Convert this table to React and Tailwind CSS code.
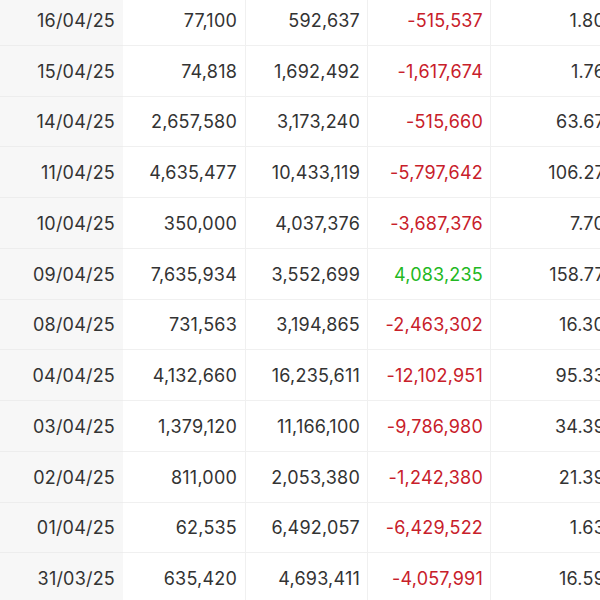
const rows = [
  ['16/04/25', '77,100', '592,637', '-515,537', '1.80'],
  ['15/04/25', '74,818', '1,692,492', '-1,617,674', '1.76'],
  ['14/04/25', '2,657,580', '3,173,240', '-515,660', '63.67'],
  ['11/04/25', '4,635,477', '10,433,119', '-5,797,642', '106.27'],
  ['10/04/25', '350,000', '4,037,376', '-3,687,376', '7.70'],
  ['09/04/25', '7,635,934', '3,552,699', '4,083,235', '158.77'],
  ['08/04/25', '731,563', '3,194,865', '-2,463,302', '16.30'],
  ['04/04/25', '4,132,660', '16,235,611', '-12,102,951', '95.33'],
  ['03/04/25', '1,379,120', '11,166,100', '-9,786,980', '34.39'],
  ['02/04/25', '811,000', '2,053,380', '-1,242,380', '21.39'],
  ['01/04/25', '62,535', '6,492,057', '-6,429,522', '1.63'],
  ['31/03/25', '635,420', '4,693,411', '-4,057,991', '16.59'],
]

export default function App() {
  return (
    <div className="w-[600px] h-[600px] overflow-hidden bg-white text-[#333333] text-[18px] tracking-[0.2px]" style={{ fontFamily: 'Inter, "Liberation Sans", sans-serif' }}>
      <div className="w-[614px] mt-[-5px]">
        {rows.map((r) => (
          <div key={r[0]} className="grid grid-cols-[123px_123px_122px_123px_123px] h-[50.75px]">
            <div className="bg-[#f7f7f7] border-b border-[#ededed] flex items-center justify-end pr-[8px] pt-[1px]">{r[0]}</div>
            <div className="border-b border-r border-[#f0f0f0] flex items-center justify-end pr-[8px] pt-[1px]">{r[1]}</div>
            <div className="border-b border-r border-[#f0f0f0] flex items-center justify-end pr-[7px] pt-[1px]">{r[2]}</div>
            <div className={`border-b border-r border-[#f0f0f0] flex items-center justify-end pr-[7px] pt-[1px] ${r[3].startsWith('-') ? 'text-[#c8202a]' : 'text-[#22b822]'}`}>{r[3]}</div>
            <div className="border-b border-[#f0f0f0] flex items-center justify-end pr-[9px] pt-[1px]">{r[4]}</div>
          </div>
        ))}
      </div>
    </div>
  )
}
